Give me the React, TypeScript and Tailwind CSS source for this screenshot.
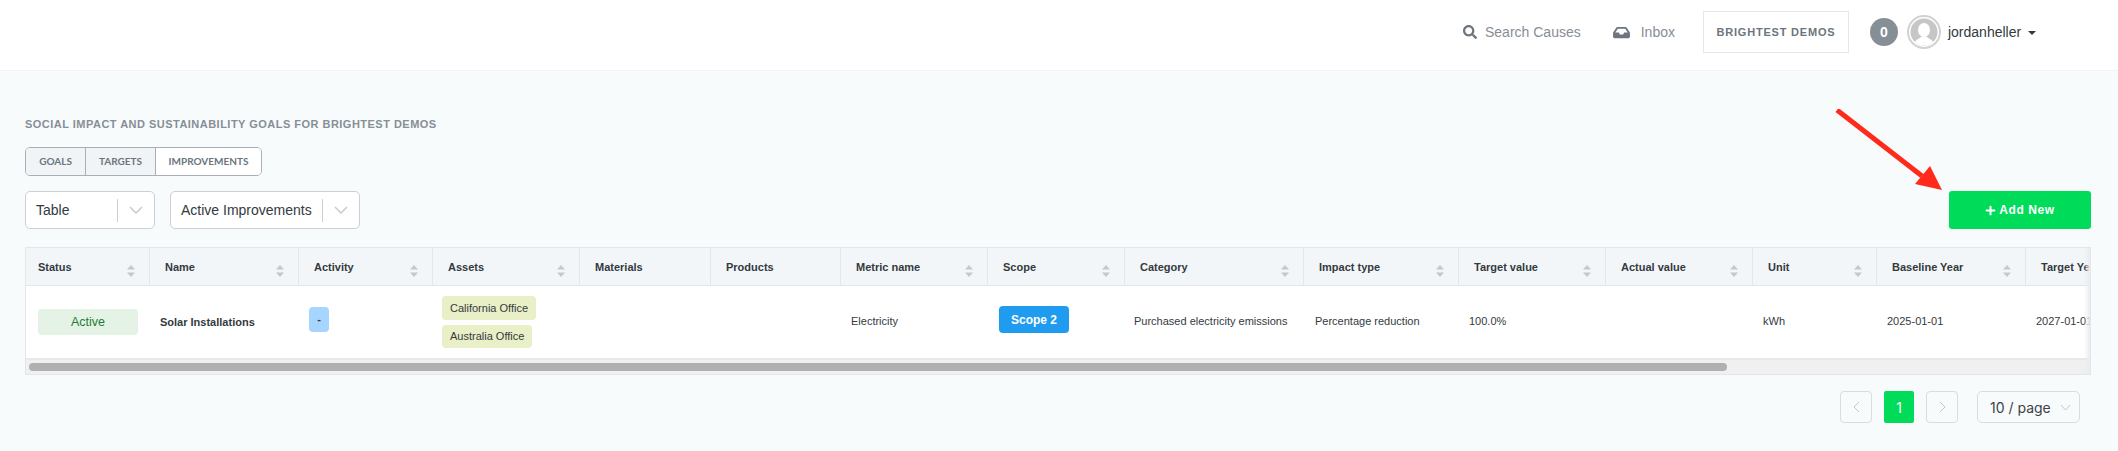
import { FaInbox, FaSearch, FaPlus } from "react-icons/fa";

const columns = [
  { label: "Status", pad: "pl-[12px]", sort: true },
  { label: "Name", pad: "pl-[15px]", sort: true },
  { label: "Activity", pad: "pl-[15px]", sort: true },
  { label: "Assets", pad: "pl-[15px]", sort: true },
  { label: "Materials", pad: "pl-[15px]", sort: false },
  { label: "Products", pad: "pl-[15px]", sort: false },
  { label: "Metric name", pad: "pl-[15px]", sort: true },
  { label: "Scope", pad: "pl-[15px]", sort: true },
  { label: "Category", pad: "pl-[15px]", sort: true },
  { label: "Impact type", pad: "pl-[15px]", sort: true },
  { label: "Target value", pad: "pl-[15px]", sort: true },
  { label: "Actual value", pad: "pl-[15px]", sort: true },
  { label: "Unit", pad: "pl-[15px]", sort: true },
  { label: "Baseline Year", pad: "pl-[15px]", sort: true },
  { label: "Target Year", pad: "pl-[15px]", sort: true },
];

const gridCols =
  "grid w-[2199px] grid-cols-[124px_149px_134px_147px_131px_130px_147px_137px_179px_155px_147px_147px_124px_149px_149px]";

function SortIcon() {
  return (
    <svg width="8" height="12" viewBox="0 0 8 12" className="absolute right-[14px] top-[17px]">
      <path d="M4 0 L8 4.5 H0 Z" fill="#c4c8cc" />
      <path d="M0 7.5 H8 L4 12 Z" fill="#c4c8cc" />
    </svg>
  );
}

function Chevron() {
  return (
    <svg width="14" height="8" viewBox="0 0 14 8" fill="none">
      <path d="M1 1 L7 7 L13 1" stroke="#c6cacd" strokeWidth="1.5" />
    </svg>
  );
}

function Dropdown({ label, width }: { label: string; width: string }) {
  return (
    <div className={`${width} h-[38px] flex items-center rounded-[5px] border border-[#ccd0d4] bg-white pl-[10px] text-[14px] text-[#333a40]`}>
      <span className="flex-1 whitespace-nowrap">{label}</span>
      <span className="h-[23px] w-px bg-[#ccd0d4]" />
      <span className="flex w-[36px] justify-center">
        <Chevron />
      </span>
    </div>
  );
}

function Avatar() {
  return (
    <svg width="34" height="34" viewBox="0 0 34 34">
      <defs>
        <clipPath id="avatar-clip">
          <circle cx="17" cy="17" r="13.5" />
        </clipPath>
      </defs>
      <circle cx="17" cy="17" r="16" fill="#fff" stroke="#d2d2d2" strokeWidth="2" />
      <circle cx="17" cy="17" r="13.5" fill="#c6c6c6" />
      <g clipPath="url(#avatar-clip)">
        <ellipse cx="17" cy="15" rx="6" ry="7" fill="#fff" />
        <path d="M5 32 C7 25 12 24 14.5 21.5 H19.5 C22 24 27 25 29 32 Z" fill="#fff" />
      </g>
    </svg>
  );
}

export default function App() {
  return (
    <div className="min-h-screen bg-[#f8fbfc] font-['Liberation_Sans',Arial,sans-serif]">
      <header className="h-[71px] border-b border-[#f2f5f6] bg-white pt-[11px]">
        <div className="ml-[1463px] flex h-[42px] items-center">
          <FaSearch className="h-[14px] w-[14px] text-[#6c757d]" />
          <span className="ml-[8px] whitespace-nowrap text-[14px] text-[#868e96]">Search Causes</span>
          <FaInbox className="ml-[32px] h-[15px] w-[17px] text-[#6c757d]" />
          <span className="ml-[11px] text-[14px] text-[#868e96]">Inbox</span>
          <div className="ml-[28px] flex h-[42px] w-[146px] items-center justify-center border border-[#e4e7ea] bg-white text-[11px] font-bold tracking-[0.8px] text-[#6c757d]">
            BRIGHTEST DEMOS
          </div>
          <div className="ml-[21px] flex h-[28px] w-[28px] items-center justify-center rounded-full bg-[#868e96] text-[14px] font-bold text-white">
            0
          </div>
          <div className="ml-[9px]">
            <Avatar />
          </div>
          <span className="ml-[7px] text-[14px] text-[#343a40]">jordanheller</span>
          <span className="ml-[7px] mt-[1px] h-0 w-0 border-x-[4px] border-t-[4px] border-x-transparent border-t-[#343a40]" />
        </div>
      </header>

      <main className="relative pl-[25px] pr-[27px] pt-[47px]">
        <h1 className="text-[11px] font-bold leading-[12px] tracking-[0.48px] text-[#868e96]">
          SOCIAL IMPACT AND SUSTAINABILITY GOALS FOR BRIGHTEST DEMOS
        </h1>

        <div className="mt-[17px] flex h-[29px] w-[237px] overflow-hidden rounded-[5px] border border-[#a9afb5] font-['Lato',sans-serif] text-[10px] font-bold text-[#6c757d]">
          <div className="flex w-[60px] items-center justify-center border-r border-[#a9afb5] bg-[#f1f4f7]">GOALS</div>
          <div className="flex w-[70px] items-center justify-center border-r border-[#a9afb5] bg-[#f1f4f7]">TARGETS</div>
          <div className="flex flex-1 items-center justify-center bg-white">IMPROVEMENTS</div>
        </div>

        <div className="mt-[15px] flex items-center justify-between">
          <div className="flex gap-[15px]">
            <Dropdown label="Table" width="w-[130px]" />
            <Dropdown label="Active Improvements" width="w-[190px]" />
          </div>
          <button className="flex h-[38px] w-[142px] items-center justify-center gap-[3px] rounded-[3px] bg-[#00dc5a] text-[12px] font-bold tracking-[0.6px] text-white">
            <FaPlus className="h-[11px] w-[11px]" />
            Add New
          </button>
        </div>

        <svg width="110" height="86" viewBox="0 0 110 86" className="absolute left-[1834px] top-[38px]">
          <path d="M3 1 L88 67" stroke="#ff2a1a" strokeWidth="5" fill="none" />
          <path d="M108 81 L81 75 L96 57 Z" fill="#ff2a1a" />
        </svg>

        <div className="relative mt-[18px] overflow-hidden border border-[#e4e7ea] bg-white">
          <div className={`${gridCols} h-[38px] border-b border-[#e4e7ea] bg-[#f3f6f9] text-[11px] font-bold text-[#343a40]`}>
            {columns.map((c) => (
              <div key={c.label} className={`${c.pad} relative flex items-center whitespace-nowrap border-r border-[#e4e7ea] pt-[1px]`}>
                {c.label}
                {c.sort && <SortIcon />}
              </div>
            ))}
          </div>
          <div className={`${gridCols} h-[72px] items-center text-[11px] text-[#343a40]`}>
            <div className="pl-[12px]">
              <div className="flex h-[26px] w-[100px] items-center justify-center rounded-[4px] bg-[#e5f2e6] text-[12.5px] text-[#1f7d33]">
                Active
              </div>
            </div>
            <div className="pl-[10px] font-bold">Solar Installations</div>
            <div className="pl-[10px]">
              <div className="mb-[5px] flex h-[25px] w-[20px] items-center justify-center rounded-[4px] bg-[#a6d5ff] font-bold">-</div>
            </div>
            <div className="flex flex-col items-start gap-[5px] pl-[9px]">
              <span className="flex h-[24px] items-center rounded-[4px] bg-[#e9efc7] px-[8px]">California Office</span>
              <span className="flex h-[23px] items-center rounded-[4px] bg-[#e9efc7] px-[8px]">Australia Office</span>
            </div>
            <div />
            <div />
            <div className="pb-[2px] pl-[10px]">Electricity</div>
            <div className="pl-[11px]">
              <div className="mb-[5px] flex h-[27px] w-[70px] items-center justify-center rounded-[4px] bg-[#1f9cf0] text-[12px] font-bold text-white">
                Scope 2
              </div>
            </div>
            <div className="whitespace-nowrap pb-[2px] pl-[9px]">Purchased electricity emissions</div>
            <div className="whitespace-nowrap pb-[2px] pl-[11px]">Percentage reduction</div>
            <div className="pb-[2px] pl-[10px]">100.0%</div>
            <div />
            <div className="pb-[2px] pl-[10px]">kWh</div>
            <div className="pb-[2px] pl-[10px]">2025-01-01</div>
            <div className="pb-[2px] pl-[10px]">2027-01-01</div>
          </div>
          <div className="h-[16px] border-t-2 border-[#e8e8e8] bg-[#f0f0f0] px-[3px] pt-[3px]">
            <div className="h-[8px] w-[1698px] rounded-full bg-[#b0b0b0]" />
          </div>
          <div className="absolute inset-y-0 right-0 w-[6px] bg-gradient-to-l from-[#e9ecee] to-transparent" />
        </div>

        <div className="mt-[16px] flex items-center justify-end pr-[11px]">
          <div className="flex h-[32px] w-[32px] items-center justify-center rounded-[4px] border border-[#d9dde0]">
            <svg width="7" height="12" viewBox="0 0 7 12" fill="none"><path d="M6 1 L1 6 L6 11" stroke="#c4c8cc" /></svg>
          </div>
          <div className="ml-[12px] flex h-[32px] w-[30px] items-center justify-center rounded-[2px] bg-[#00dc5a] font-['Inter',sans-serif] text-[14px] text-white">1</div>
          <div className="ml-[12px] flex h-[32px] w-[32px] items-center justify-center rounded-[4px] border border-[#d9dde0]">
            <svg width="7" height="12" viewBox="0 0 7 12" fill="none"><path d="M1 1 L6 6 L1 11" stroke="#c4c8cc" /></svg>
          </div>
          <div className="ml-[19px] flex h-[32px] w-[103px] items-center justify-between rounded-[5px] border border-[#d9dde0] pl-[12px] pr-[8px] font-['Inter',sans-serif] text-[14px] text-[#3c4247]">
            10 / page
            <svg width="11" height="7" viewBox="0 0 11 7" fill="none"><path d="M1 1 L5.5 6 L10 1" stroke="#c4c8cc" /></svg>
          </div>
        </div>
      </main>
    </div>
  );
}
